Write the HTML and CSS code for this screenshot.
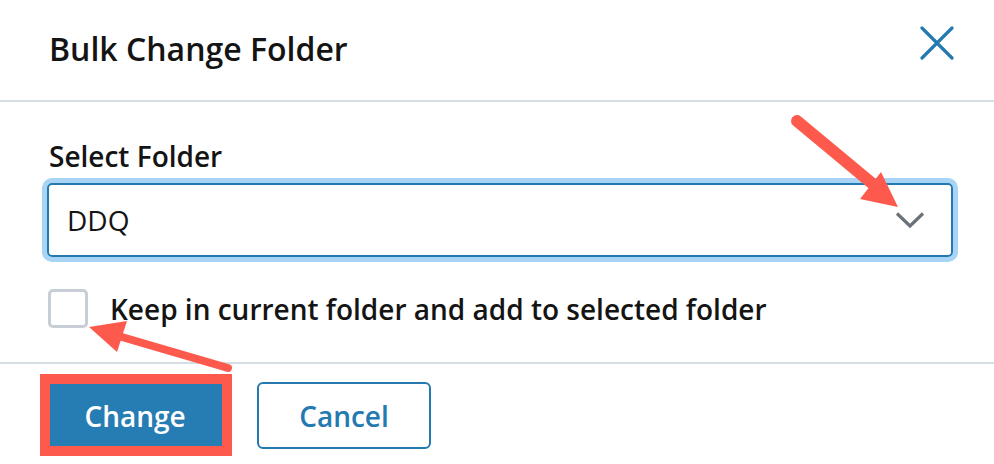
FILE: index.html
```html
<!DOCTYPE html>
<html lang="en">
<head>
    <meta charset="UTF-8">
    <meta name="viewport" content="width=device-width, initial-scale=1.0">
    <title>Bulk Change Folder</title>
    <link rel="stylesheet" href="styles.css">
</head>
<body>
    <div class="modal">
        <div class="modal-header">
            <h1>Bulk Change Folder</h1>
            <button class="close-btn" aria-label="Close">
                <svg width="34" height="34" viewBox="0 0 34 34">
                    <path d="M2 2 L32 32 M32 2 L2 32" stroke="#2479b0" stroke-width="3.2" stroke-linecap="round" fill="none"/>
                </svg>
            </button>
        </div>
        <div class="modal-body">
            <label class="field-label">Select Folder</label>
            <div class="select-box">
                <span>DDQ</span>
                <svg width="30" height="18" viewBox="0 0 30 18">
                    <path d="M2 2.5 L15 15 L28 2.5" stroke="#6b7178" stroke-width="3.2" fill="none"/>
                </svg>
            </div>
            <div class="check-row">
                <span class="checkbox"></span>
                <span>Keep in current folder and add to selected folder</span>
            </div>
        </div>
        <div class="modal-footer">
            <button class="btn btn-primary">Change</button>
            <button class="btn btn-outline">Cancel</button>
        </div>
    </div>

    <!-- annotation overlay -->
    <svg class="annotations" width="994" height="464" viewBox="0 0 994 464">
        <rect x="45" y="379" width="182" height="72" fill="none" stroke="#fd5a4d" stroke-width="10"/>
        <path d="M797 121 L880 190" stroke="#fd5a4d" stroke-width="12" stroke-linecap="round" fill="none"/>
        <polygon points="898,207 881,172 860,199" fill="#fd5a4d"/>
        <path d="M228 368 L115 335" stroke="#fd5a4d" stroke-width="8" stroke-linecap="round" fill="none"/>
        <polygon points="89,327 127,321 117,352" fill="#fd5a4d"/>
    </svg>
</body>
</html>
```

FILE: styles.css
```css
* { margin:0; padding:0; box-sizing: border-box; }
body {
    background: #fff;
    font-family: "Open Sans", "Noto Sans", sans-serif;
    color: #141414;
    width: 994px;
    height: 464px;
    overflow: hidden;
    position: relative;
}
.modal-header {
    height: 102px;
    display: flex;
    align-items: center;
    justify-content: space-between;
    padding: 0 40px 0 49px;
    border-bottom: 2px solid #d5dee2;
}
.modal-header h1 {
    font-size: 32px;
    font-weight: 600;
    margin-top: -3px;
}
.close-btn {
    background: none;
    border: none;
    display: flex;
    margin-top: -15px;
}
.modal-body {
    padding: 35px 41px 34px 47px;
    border-bottom: 2px solid #d5dee2;
}
.field-label {
    display: block;
    font-size: 28px;
    font-weight: 600;
    margin-left: 2px;
    margin-bottom: 8px;
}
.select-box {
    height: 74px;
    border: 2px solid #2479b0;
    border-radius: 5px;
    box-shadow: 0 0 0 5px #a8d5f5;
    display: flex;
    align-items: center;
    justify-content: space-between;
    padding: 0 26px 0 18px;
    font-size: 28px;
}
.check-row {
    display: flex;
    align-items: center;
    gap: 22px;
    margin-top: 32px;
    font-size: 28px;
    font-weight: 600;
}
.checkbox {
    width: 40px;
    height: 39px;
    border: 3px solid #c8ced6;
    border-radius: 5px;
    margin-left: 1px;
    flex-shrink: 0;
}
.modal-footer {
    display: flex;
    gap: 35px;
    padding: 18px 0 0 48px;
}
.btn {
    height: 67px;
    width: 174px;
    border-radius: 6px;
    font-family: inherit;
    font-size: 28px;
    font-weight: 600;
}
.btn-primary {
    background: #257db3;
    color: #fff;
    border: none;
    border-radius: 0;
}
.btn-outline {
    background: #fff;
    color: #2479b0;
    border: 2px solid #2479b0;
}
.annotations {
    position: absolute;
    left: 0;
    top: 0;
    pointer-events: none;
}
```
